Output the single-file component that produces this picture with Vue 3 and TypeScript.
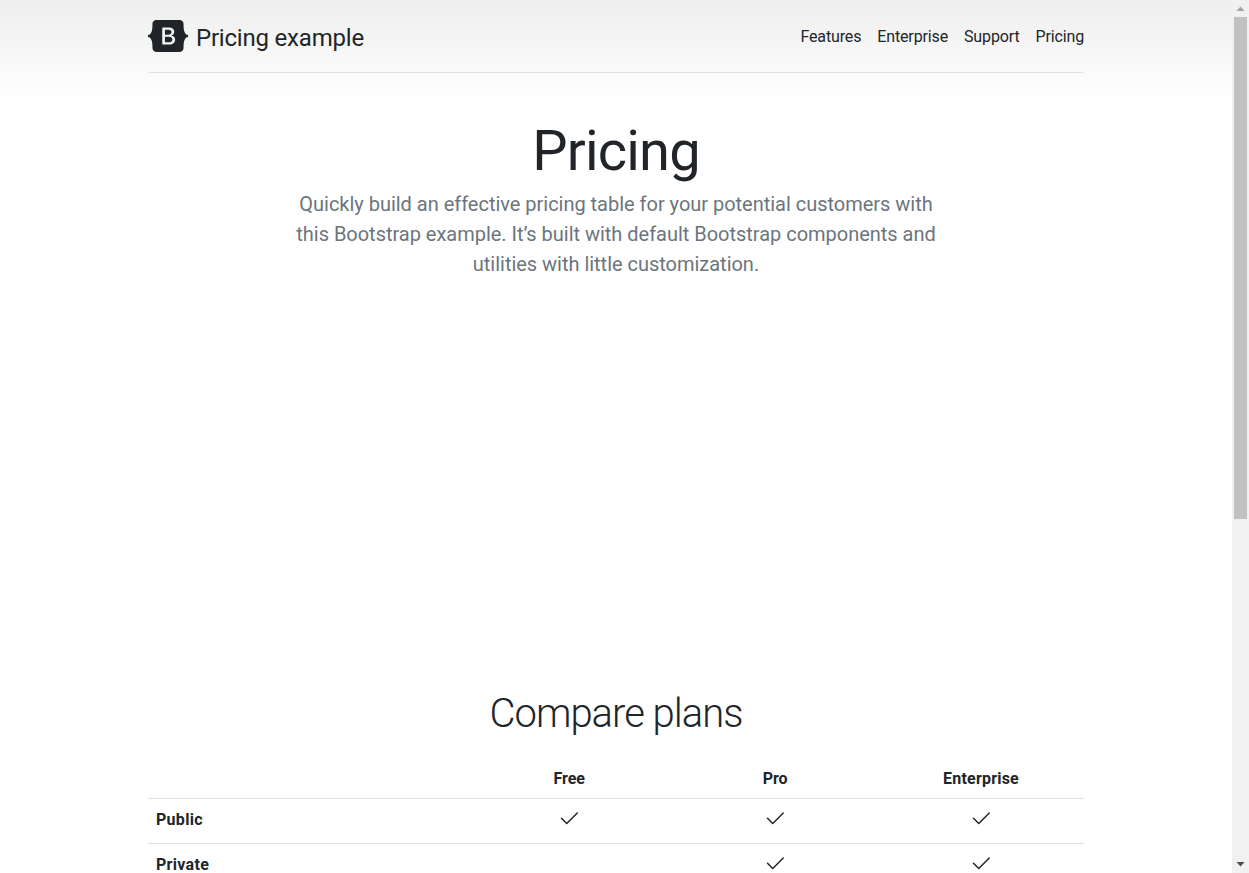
<script setup lang="ts">
const navLinks = ["Features", "Enterprise", "Support", "Pricing"];
const plans = ["Free", "Pro", "Enterprise"];
const rows = [
  { name: "Public", checks: [true, true, true] },
  { name: "Private", checks: [false, true, true] },
];
</script>

<template>
  <div class="page">
    <div class="viewport">
      <div class="container">
        <header class="site-header">
          <a class="brand">
            <svg class="logo" viewBox="0 0 118 94" width="40" height="32">
              <path
                fill-rule="evenodd"
                clip-rule="evenodd"
                d="M24.509 0c-6.733 0-11.715 5.893-11.492 12.284.214 6.14-.064 14.092-2.066 20.577C8.943 39.365 5.547 43.485 0 44.014v5.972c5.547.529 8.943 4.649 10.951 11.153 2.002 6.485 2.28 14.437 2.066 20.577C12.794 88.106 17.776 94 24.51 94H93.5c6.733 0 11.714-5.893 11.491-12.284-.214-6.14.064-14.092 2.066-20.577 2.009-6.504 5.396-10.624 10.943-11.153v-5.972c-5.547-.529-8.934-4.649-10.943-11.153-2.002-6.484-2.28-14.437-2.066-20.577C105.214 5.894 100.233 0 93.5 0H24.508zM80 57.863C80 66.663 73.436 72 62.543 72H44a2 2 0 01-2-2V24a2 2 0 012-2h18.437c9.083 0 15.044 4.92 15.044 12.474 0 5.302-4.01 10.049-9.119 10.88v.277C75.317 46.394 80 51.21 80 57.863zM60.521 28.34H49.948v14.934h8.905c6.884 0 10.68-2.772 10.68-7.727 0-4.643-3.264-7.207-8.012-7.207zM49.948 49.2v16.458H60.91c7.167 0 10.964-2.876 10.964-8.281 0-5.406-3.903-8.178-11.425-8.178H49.948z"
                fill="currentColor"
              />
            </svg>
            <span class="brand-name">Pricing example</span>
          </a>
          <nav class="nav">
            <a v-for="link in navLinks" :key="link" class="nav-link">{{ link }}</a>
          </nav>
        </header>

        <section class="pricing-header">
          <h1>Pricing</h1>
          <p>
            Quickly build an effective pricing table for your potential customers with this
            Bootstrap example. It’s built with default Bootstrap components and utilities with
            little customization.
          </p>
        </section>

        <!-- the pricing cards have not rendered yet, only their space is held -->
        <div class="cards-placeholder"></div>

        <h2>Compare plans</h2>

        <table class="compare">
          <thead>
            <tr>
              <th class="col-name"></th>
              <th v-for="plan in plans" :key="plan" class="col-plan">{{ plan }}</th>
            </tr>
          </thead>
          <tbody>
            <tr v-for="row in rows" :key="row.name">
              <th class="row-name">{{ row.name }}</th>
              <td v-for="(on, i) in row.checks" :key="i">
                <svg v-if="on" class="check" viewBox="0 0 16 16" width="24" height="24">
                  <path
                    d="M13.854 3.646a.5.5 0 0 1 0 .708l-7 7a.5.5 0 0 1-.708 0l-3.5-3.5a.5.5 0 1 1 .708-.708L6.5 10.293l6.646-6.647a.5.5 0 0 1 .708 0z"
                    fill="currentColor"
                  />
                </svg>
              </td>
            </tr>
          </tbody>
        </table>
      </div>
    </div>

    <div class="scrollbar">
      <svg class="arrow" viewBox="0 0 17 17" width="17" height="17">
        <polygon points="8.5,6.5 12.5,11 4.5,11" fill="#a3a3a3" />
      </svg>
      <div class="track"><div class="thumb"></div></div>
      <svg class="arrow" viewBox="0 0 17 17" width="17" height="17">
        <polygon points="4.5,6 12.5,6 8.5,10.5" fill="#505050" />
      </svg>
    </div>
  </div>
</template>

<style scoped>
.page {
  display: flex;
  height: 873px;
  overflow: hidden;
  font-family: Roboto, "Noto Sans", sans-serif;
  font-size: 16px;
  line-height: 24px;
  color: #212529;
}

.viewport {
  flex: 1;
  min-width: 0;
  background-image: linear-gradient(180deg, #eee, #fff 100px, #fff);
}

.container {
  width: 936px;
  margin: 0 auto;
  padding-top: 16px;
}

.site-header {
  display: flex;
  justify-content: space-between;
  padding-top: 4px;
  padding-bottom: 16px;
  margin-bottom: 24px;
  border-bottom: 1px solid #dee2e6;
}

.brand {
  display: flex;
  align-items: flex-start;
  color: #212529;
}

.logo {
  display: block;
  margin-right: 8px;
}

.brand-name {
  font-size: 24px;
  line-height: 36px;
  letter-spacing: -0.2px;
}

.nav {
  display: flex;
  gap: 16px;
  padding-top: 5px;
  letter-spacing: -0.14px;
}

.pricing-header {
  width: 700px;
  margin: 0 auto;
  text-align: center;
  padding-top: 21px;
  padding-bottom: 25px;
}

h1 {
  margin: 0 0 4px;
  font-size: 56px;
  font-weight: 400;
  line-height: 67px;
  letter-spacing: -0.8px;
}

.pricing-header p {
  width: 660px;
  margin: 0 auto;
  font-size: 20px;
  line-height: 30px;
  color: #6c757d;
  letter-spacing: -0.02px;
}

.cards-placeholder {
  height: 386px;
}

h2 {
  margin: 0 0 20px;
  font-size: 40px;
  font-weight: 300;
  line-height: 48px;
  text-align: center;
  letter-spacing: -1px;
}

.compare {
  width: 100%;
  border-collapse: collapse;
  table-layout: fixed;
}

.compare th,
.compare td {
  box-sizing: border-box;
  padding: 8px;
  text-align: center;
  vertical-align: top;
  font-size: 16px;
  line-height: 24px;
  border-bottom: 1px solid #dee2e6;
}

.compare tbody th,
.compare tbody td {
  padding-bottom: 12px;
}

.compare th {
  font-weight: 700;
  padding-top: 9px;
  padding-bottom: 7px;
}

.compare tbody th {
  padding-bottom: 11px;
  letter-spacing: 0.3px;
}

.col-name {
  width: 34%;
}

.col-plan {
  width: 22%;
}

.col-plan:last-child {
  letter-spacing: 0.2px;
}

.compare .row-name {
  text-align: left;
}

.check {
  display: block;
  margin: 0 auto;
}

.scrollbar {
  display: flex;
  flex-direction: column;
  flex: 0 0 17px;
  background: #f1f1f1;
}

.track {
  flex: 1;
  padding: 0 2px;
}

.thumb {
  height: 502px;
  background: #c1c1c1;
}

.arrow {
  display: block;
  flex: 0 0 17px;
}
</style>

<style>
html,
body {
  margin: 0;
  overflow: hidden;
}
</style>
